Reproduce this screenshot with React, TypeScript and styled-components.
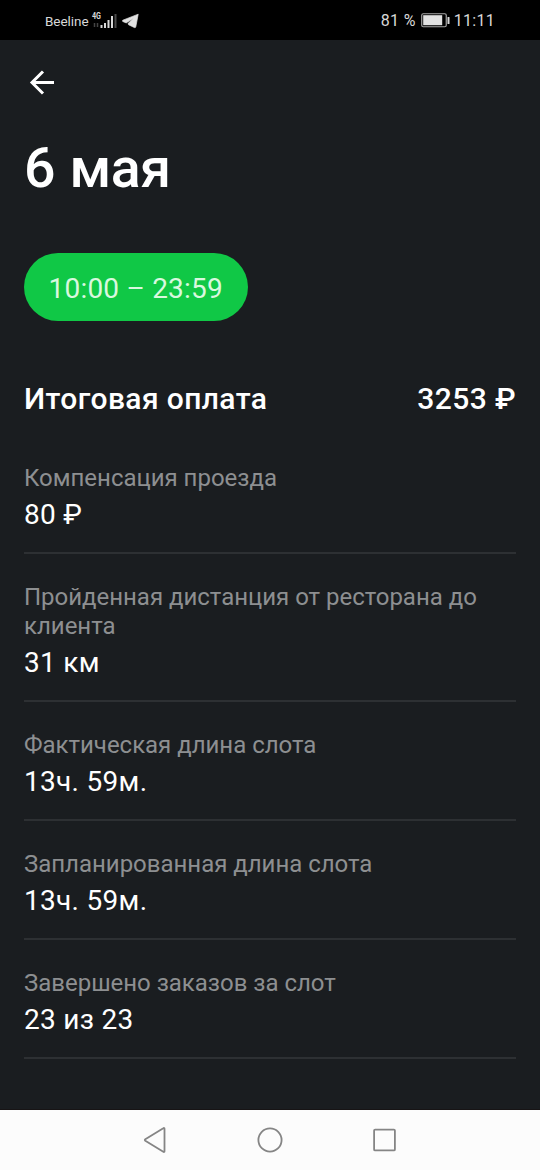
import React from "react";
import styled, { createGlobalStyle } from "styled-components";

const GlobalStyle = createGlobalStyle`
  * { box-sizing: border-box; }
  body { margin: 0; background: #1a1d20; }
`;

const Screen = styled.div`
  display: flex;
  flex-direction: column;
  width: 540px;
  height: 1170px;
  overflow: hidden;
  background: #1a1d20;
  color: #ffffff;
  font-family: Roboto, "Noto Sans", sans-serif;
`;

const StatusBar = styled.header`
  flex: none;
  display: flex;
  align-items: center;
  justify-content: space-between;
  height: 40px;
  padding: 1px 45px 0;
  background: #000000;
  color: #d8d8d8;
`;

const StatusGroup = styled.div`
  display: flex;
  align-items: center;
`;

const Carrier = styled.span`
  font-size: 13.5px;
  line-height: 16px;
  letter-spacing: -0.05px;
`;

const StatusText = styled.span`
  font-size: 16px;
  line-height: 20px;
  letter-spacing: 0.3px;
`;

const SignalIcon = styled.svg`
  margin-left: 2px;
`;

const TelegramIcon = styled.svg`
  margin-left: 5px;
`;

const BatteryIcon = styled.svg`
  margin: 0 4px 0 5px;
`;

const Content = styled.main`
  flex: 1;
  display: flex;
  flex-direction: column;
  align-items: stretch;
  padding: 24px 24px 0;
`;

const BackButton = styled.button`
  width: 36px;
  height: 36px;
  padding: 0;
  border: 0;
  background: none;
  color: inherit;
`;

const Title = styled.h1`
  margin: 36px 0 0;
  font-size: 55.5px;
  line-height: 66px;
  font-weight: 500;
  letter-spacing: -0.4px;
  word-spacing: 1px;
`;

const TimeChip = styled.div`
  align-self: flex-start;
  display: flex;
  align-items: center;
  justify-content: center;
  width: 223.5px;
  height: 67.5px;
  margin-top: 51.2px;
  padding-top: 3px;
  border-radius: 34px;
  background: #10c846;
  color: #d9f8df;
  font-size: 28px;
  letter-spacing: 0.2px;
`;

const Total = styled.div`
  display: flex;
  justify-content: space-between;
  margin-top: 60.3px;
  font-size: 30px;
  line-height: 36px;
  font-weight: 500;
  letter-spacing: 0.4px;
`;

const Details = styled.dl`
  margin: 18px 0 0;
`;

const Row = styled.div`
  padding: 29px 0 21px;
  border-bottom: 2px solid #2d3033;
`;

const Label = styled.dt`
  color: #8d8f91;
  font-size: 24px;
  line-height: 29px;
  letter-spacing: -0.02px;
`;

const Value = styled.dd`
  margin: 5px 0 0;
  font-size: 28px;
  line-height: 33px;
  letter-spacing: 0.3px;
`;

const NavBar = styled.nav`
  flex: none;
  display: flex;
  align-items: center;
  justify-content: center;
  gap: 83px;
  height: 61px;
  border-top: 1px solid #171415;
  background: #fcfcfc;
`;

const NavIcon = styled.svg`
  fill: none;
  stroke: #858585;
  stroke-width: 1.8;
  stroke-linejoin: round;
`;

const rows = [
  { label: "Компенсация проезда", value: "80 ₽" },
  { label: "Пройденная дистанция от ресторана до клиента", value: "31 км" },
  { label: "Фактическая длина слота", value: "13ч. 59м." },
  { label: "Запланированная длина слота", value: "13ч. 59м." },
  { label: "Завершено заказов за слот", value: "23 из 23" },
];

const NetworkLabel = styled.text`
  font: 700 9.5px Roboto, sans-serif;
  fill: #d8d8d8;
`;

export default function App() {
  return (
    <Screen>
      <GlobalStyle />
      <StatusBar>
        <StatusGroup>
          <Carrier>Beeline</Carrier>
          <SignalIcon width="26" height="20" viewBox="0 0 26 20">
            <NetworkLabel x="1" y="8" textLength="9" lengthAdjust="spacingAndGlyphs">4G</NetworkLabel>
            <path d="M3.500 12v4M6.500 12v4" stroke="#444" strokeWidth="1.500" />
            <path d="M10.500 14v3M14 12v5M17.500 9v8M21 5v12" stroke="#d8d8d8" strokeWidth="2" />
            <path d="M24.500 3v14" stroke="#484848" strokeWidth="2" />
          </SignalIcon>
          <TelegramIcon width="17" height="16" viewBox="0 0 17 16">
            <path d="M16.200 1.200.8 7.200c-.6.300-.5 1 0 1.300l3.400 1.400L11.500 5.300 6 10.500l.5 1.200 5.800 2.800c.7.300 1.300.1 1.500-.7z" fill="#e2e2e2" stroke="#e2e2e2" strokeWidth="0.700" strokeLinejoin="round" />
          </TelegramIcon>
        </StatusGroup>
        <StatusGroup>
          <StatusText>81 %</StatusText>
          <BatteryIcon width="29" height="15" viewBox="0 0 29 15">
            <rect x="0.750" y="0.750" width="24.500" height="13" rx="1.500" fill="none" stroke="#a8a8a8" strokeWidth="1.200" />
            <rect x="2.200" y="2.200" width="19" height="10" fill="#e2e2e2" />
            <rect x="26.500" y="4" width="2" height="7" rx="0.500" fill="#d8d8d8" />
          </BatteryIcon>
          <StatusText>11:11</StatusText>
        </StatusGroup>
      </StatusBar>
      <Content>
        <BackButton aria-label="Назад">
          <svg width="36" height="36" viewBox="0 0 36 36" fill="none" stroke="currentColor" strokeWidth="3">
            <path d="M19 7.500 8 18.500l11 11M8 18.500h22" />
          </svg>
        </BackButton>
        <Title>6 мая</Title>
        <TimeChip>10:00 – 23:59</TimeChip>
        <Total>
          <span>Итоговая оплата</span>
          <span>3253 ₽</span>
        </Total>
        <Details>
          {rows.map((row) => (
            <Row key={row.label}>
              <Label>{row.label}</Label>
              <Value>{row.value}</Value>
            </Row>
          ))}
        </Details>
      </Content>
      <NavBar>
        <NavIcon width="32" height="32" viewBox="0 0 32 32">
          <path d="M25.500 4.800v22.400c0 .8-.6 1-1.200.6L6.300 16.800q-1-.8 0-1.600L24.300 4.200c.6-.4 1.200-.2 1.200.6z" />
        </NavIcon>
        <NavIcon width="32" height="32" viewBox="0 0 32 32">
          <circle cx="16" cy="16" r="11.600" />
        </NavIcon>
        <NavIcon width="32" height="32" viewBox="0 0 32 32">
          <rect x="5.100" y="5.600" width="20.800" height="20.800" rx="1" />
        </NavIcon>
      </NavBar>
    </Screen>
  );
}
